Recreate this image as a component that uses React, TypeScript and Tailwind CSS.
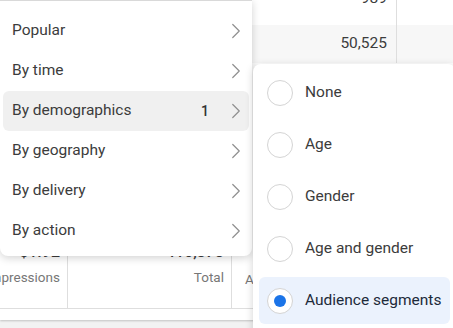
import { ChevronRight } from 'lucide-react';

const breakdowns = [
  { label: 'Popular' },
  { label: 'By time' },
  { label: 'By demographics', count: 1, active: true },
  { label: 'By geography' },
  { label: 'By delivery' },
  { label: 'By action' },
];

const demographics = ['None', 'Age', 'Gender', 'Age and gender', 'Audience segments'];
const selected = 'Audience segments';

export default function App() {
  return (
    <div className="relative w-[453px] h-[328px] overflow-hidden bg-[#f2f2f2] font-['Roboto',sans-serif] text-[#3c3c3c]">
      {/* table behind the menus */}
      <div className="flex flex-col bg-white h-[320px] shadow-[0_1px_2px_rgba(0,0,0,0.2)]">
        <div className="flex h-[25px]">
          <div className="w-[232px]" />
          <div className="w-[165px] flex justify-end items-start pr-[9px] border-r border-[#dedede]">
            <span className="text-[15.5px] leading-[18px] -mt-[11px]">989</span>
          </div>
          <div className="flex-1" />
        </div>
        <div className="flex h-[38px] bg-[#f7f7f7]">
          <div className="w-[232px]" />
          <div className="w-[165px] flex justify-end items-center pr-[9px] border-r border-[#dedede]">
            <span className="text-[15.5px]">50,525</span>
          </div>
          <div className="flex-1" />
        </div>
        <div className="flex-1" />
        <div className="flex h-[66px] border-b border-[#dedede]">
          <div className="w-[68px] flex flex-col items-end pr-[7px] border-r border-[#dedede]">
            <span className="text-[16px] font-medium leading-[18px]">$1.92</span>
            <span className="text-[13.5px] text-[#777] mt-[6px] whitespace-nowrap">Impressions</span>
          </div>
          <div className="w-[164px] flex flex-col items-end pr-[7px] border-r border-[#dedede]">
            <span className="text-[16px] font-medium leading-[18px]">416,373</span>
            <span className="text-[13.5px] text-[#777] mt-[6px]">Total</span>
          </div>
          <div className="flex-1 pl-[13px] pt-[24px]">
            <span className="text-[13.5px] text-[#777]">Avg</span>
          </div>
        </div>
        <div className="h-[11px]" />
      </div>

      {/* breakdown menu */}
      <div className="absolute left-0 top-0 w-[252px] bg-white border-t border-[#d9d9d9] rounded-b-lg shadow-[0_2px_8px_rgba(0,0,0,0.18)] pt-[10px] pb-[5px]">
        {breakdowns.map((item) => (
          <div
            key={item.label}
            className={`mx-[3px] h-[40px] flex items-center pl-[9px] rounded-md ${item.active ? 'bg-[#f0f0f0]' : ''}`}
          >
            <span className="flex-1 text-[15.5px]">{item.label}</span>
            {item.count && <span className="text-[14px] font-medium text-[#333] mr-[14px]">{item.count}</span>}
            <ChevronRight className="w-[26px] h-[26px] text-[#8f8f8f]" strokeWidth={1.1} />
          </div>
        ))}
      </div>

      {/* demographics submenu */}
      <div className="absolute left-[253px] top-[64px] w-[203px] h-[272px] bg-white rounded-lg shadow-[0_2px_8px_rgba(0,0,0,0.18)] pt-[5px] flex flex-col gap-[5px]">
        {demographics.map((label) => {
          const on = label === selected;
          return (
            <div
              key={label}
              className={`mx-[6px] h-[47px] flex items-center gap-[12px] pl-[8px] rounded-md ${on ? 'bg-[#ebf2fd]' : ''}`}
            >
              <span className="w-[26px] h-[26px] rounded-full border-[1.5px] border-[#d4d4d4] bg-white flex items-center justify-center">
                {on && <span className="w-[12px] h-[12px] rounded-full bg-[#1b74e8]" />}
              </span>
              <span className={`text-[15.5px] whitespace-nowrap ${on ? 'text-[#1d2a3a]' : ''}`}>{label}</span>
            </div>
          );
        })}
      </div>
    </div>
  );
}
